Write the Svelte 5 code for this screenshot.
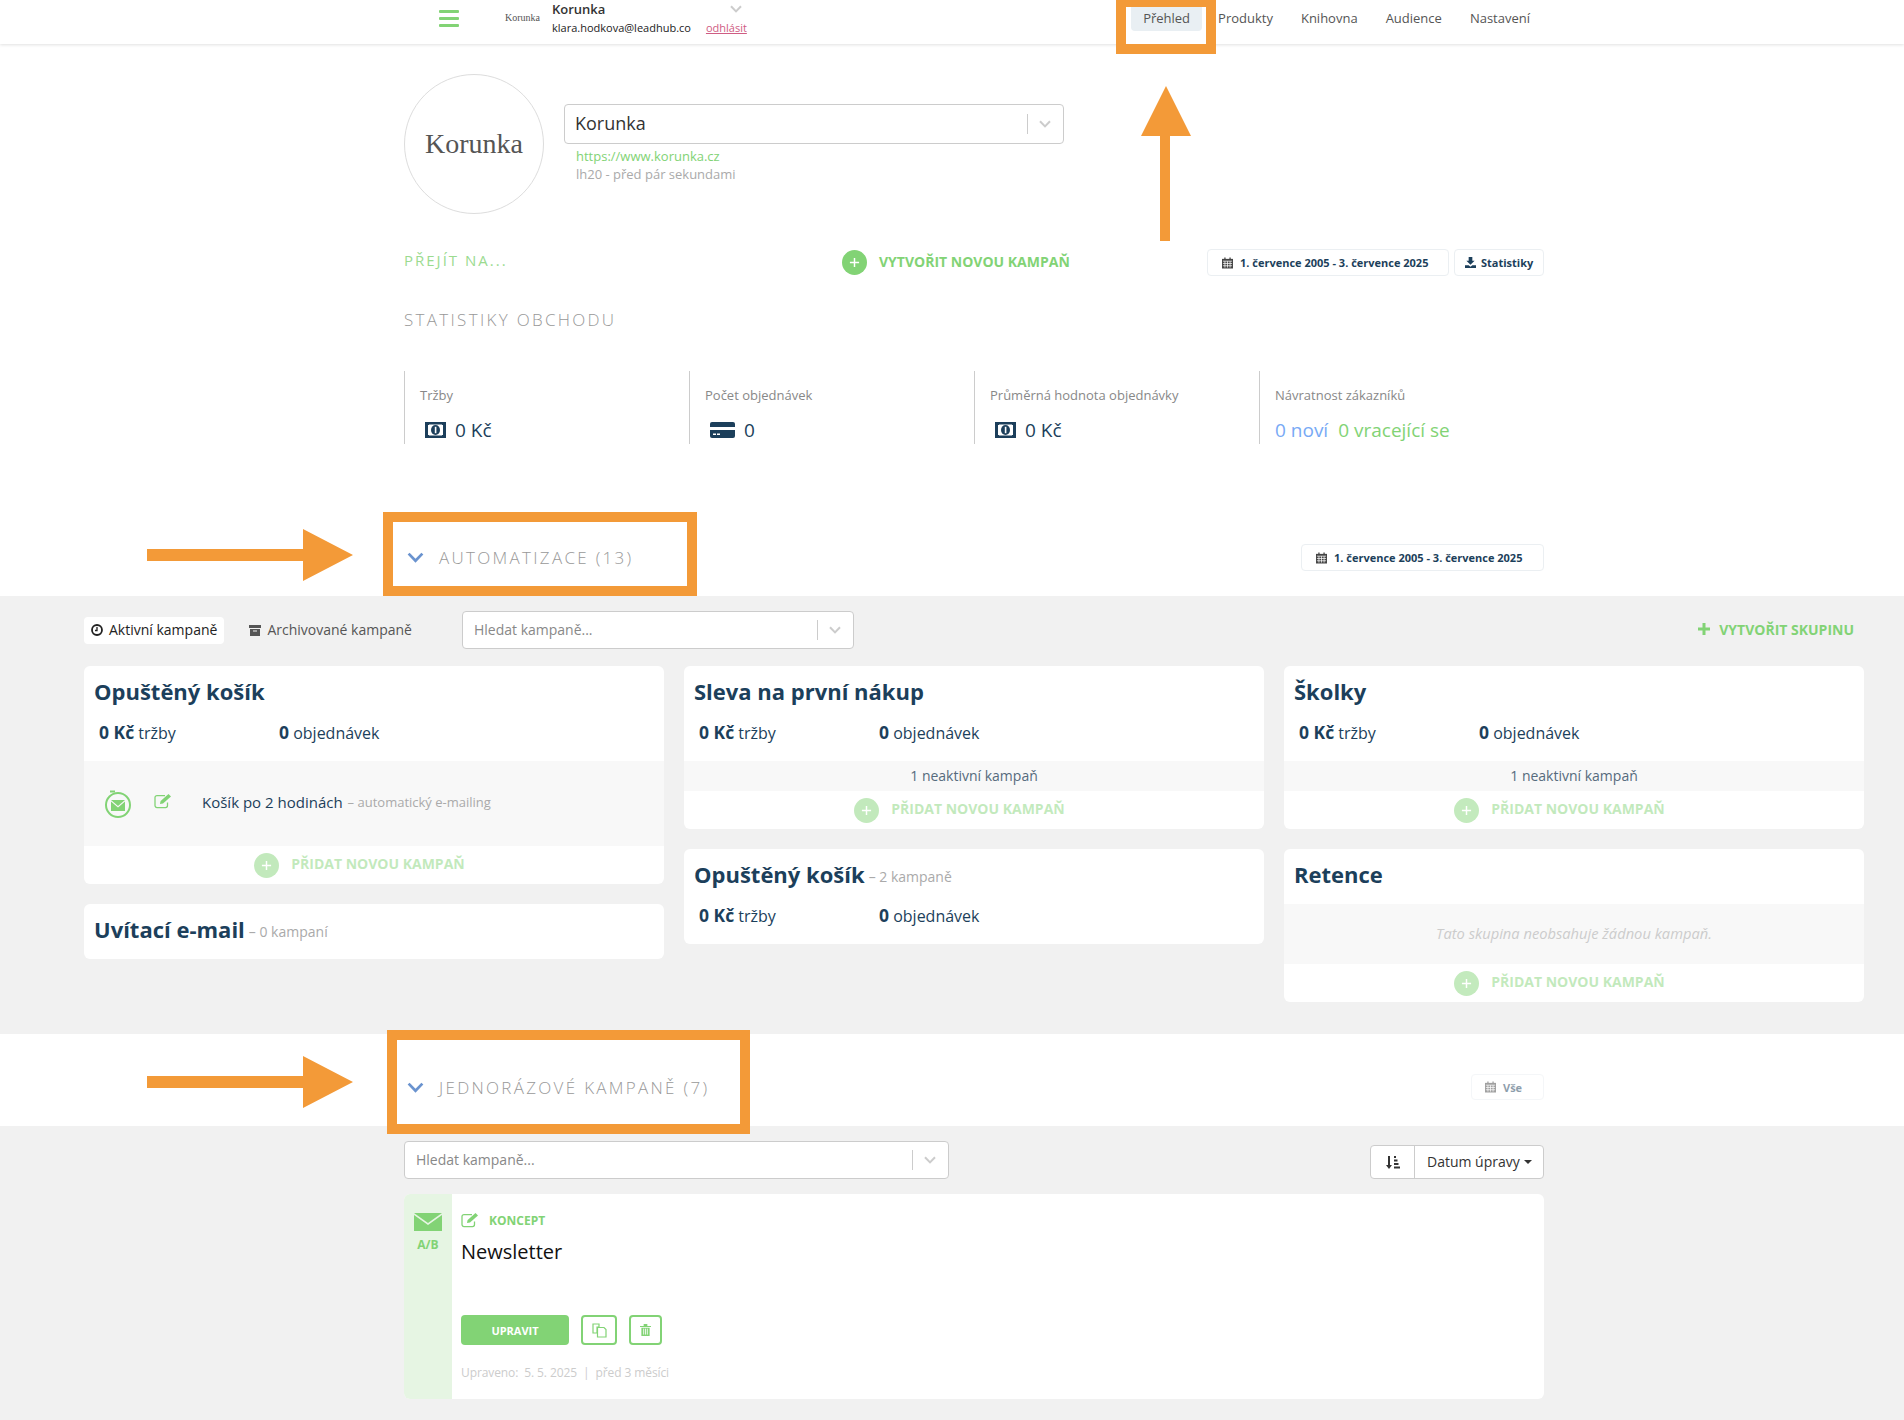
<script>
	// Campaign groups, one array per column
	const columns = [
		[
			{ title: 'Opuštěný košík', stats: true, campaign: true, add: true },
			{ title: 'Uvítací e-mail', note: '– 0 kampaní' }
		],
		[
			{ title: 'Sleva na první nákup', stats: true, inactive: '1 neaktivní kampaň', add: true },
			{ title: 'Opuštěný košík', note: '– 2 kampaně', stats: true }
		],
		[
			{ title: 'Školky', stats: true, inactive: '1 neaktivní kampaň', add: true },
			{ title: 'Retence', empty: 'Tato skupina neobsahuje žádnou kampaň.', add: true }
		]
	];

	const navLinks = ['Přehled', 'Produkty', 'Knihovna', 'Audience', 'Nastavení'];

	const stats = [
		{ label: 'Tržby', icon: 'money', value: '0 Kč' },
		{ label: 'Počet objednávek', icon: 'card', value: '0' },
		{ label: 'Průměrná hodnota objednávky', icon: 'money', value: '0 Kč' }
	];
</script>

{#snippet chevron(cls)}
	<svg class={cls} viewBox="0 0 12 8" width="12" height="8"><path d="M1 1.2 6 6.4l5-5.2" fill="none" stroke="currentColor" stroke-width="2" /></svg>
{/snippet}

{#snippet calendar()}
	<svg class="cal" viewBox="0 0 12 12" width="11" height="12">
		<path d="M0 1.5h12V12H0z" fill="currentColor" />
		<path d="M1 4h10M1 6.5h10M1 9h10M3.2 4v7M6 4v7M8.8 4v7" stroke="#fff" stroke-width=".8" fill="none" />
		<path d="M2.5 0h1.4v2.5H2.5zM8.1 0h1.4v2.5H8.1z" fill="currentColor" />
	</svg>
{/snippet}

{#snippet plusCircle()}
	<span class="plus-circle">
		<svg viewBox="0 0 12 12" width="11" height="11"><path d="M6 1v10M1 6h10" stroke="#fff" stroke-width="1.6" /></svg>
	</span>
{/snippet}

{#snippet editIcon(w)}
	<svg viewBox="0 0 19 16" width={w} height={w * 0.85}>
		<path d="M13.5 9.5v3a2 2 0 0 1-2 2H3a2 2 0 0 1-2-2V4.500a2 2 0 0 1 2-2h8" fill="none" stroke="#82d375" stroke-width="1.3" />
		<path d="M6 11l.6-3L14.500 1l2.500 2.400L9 10.500z" fill="#82d375" />
	</svg>
{/snippet}

{#snippet moneyIcon()}
	<svg class="stat-icon" viewBox="0 0 21 16" width="21" height="16">
		<path d="M0 0h21v16H0z" fill="#1c3f5b" />
		<path d="M3 2.500h15v11H3z" fill="#fff" />
		<path d="M0 0h4v3H0zM17 0h4v3h-4zM0 13h4v3H0zM17 13h4v3h-4z" fill="#1c3f5b" />
		<ellipse cx="10.500" cy="8" rx="4.500" ry="5" fill="#1c3f5b" />
		<path d="M9.800 4.800h1.600v6.400H9.800z" fill="#fff" />
	</svg>
{/snippet}

{#snippet cardIcon()}
	<svg class="stat-icon" viewBox="0 0 25 16" width="25" height="16">
		<path d="M2 0h21a2 2 0 0 1 2 2v3H0V2a2 2 0 0 1 2-2z" fill="#1c3f5b" />
		<path d="M0 8h25v6a2 2 0 0 1-2 2H2a2 2 0 0 1-2-2z" fill="#1c3f5b" />
		<path d="M3 11.500h3v1.500H3zM7 11.500h3v1.500H7z" fill="#fff" />
	</svg>
{/snippet}

{#snippet plainSelect(text, cls)}
	<div class="select {cls}">
		<span class="select-text">{text}</span>
		<span class="select-sep"></span>
		{@render chevron('select-arrow')}
	</div>
{/snippet}

<header class="topbar">
	<div class="burger"><i></i><i></i><i></i></div>
	<span class="mini-logo">Korunka</span>
	<div class="account">
		<div class="account-top">
			<strong>Korunka</strong>
			{@render chevron('account-arrow')}
		</div>
		<div class="account-bottom">
			<span>klara.hodkova@leadhub.co</span>
			<a href="#logout">odhlásit</a>
		</div>
	</div>
	<nav class="nav">
		{#each navLinks as link, i}
			<a href="#nav" class="nav-link" class:active={i === 0}>{link}</a>
		{/each}
	</nav>
</header>

<section class="wrap overview">
	<div class="brand">
		<div class="avatar"><span>Korunka</span></div>
		<div class="brand-info">
			{@render plainSelect('Korunka', 'select-big')}
			<a class="site" href="#site">https://www.korunka.cz</a>
			<div class="sync">lh20 - před pár sekundami</div>
		</div>
	</div>

	<div class="actions">
		<span class="goto">PŘEJÍT NA...</span>
		<a class="create" href="#create">{@render plusCircle()}<span>VYTVOŘIT NOVOU KAMPAŇ</span></a>
		<div class="action-btns">
			<button class="date-btn">{@render calendar()}<span>1. července 2005 - 3. července 2025</span></button>
			<button class="stat-btn">
				<svg viewBox="0 0 12 12" width="11" height="11"><path d="M4 0h4v4h2.500L6 8.500 1.500 4H4zM0 9h4l2 1.500L8 9h4v3H0z" fill="currentColor" /></svg>
				<span>Statistiky</span>
			</button>
		</div>
	</div>

	<h2 class="section-title">STATISTIKY OBCHODU</h2>

	<div class="stats">
		{#each stats as stat}
			<div class="stat">
				<div class="stat-label">{stat.label}</div>
				<div class="stat-value">
					{#if stat.icon === 'money'}{@render moneyIcon()}{:else}{@render cardIcon()}{/if}
					<span>{stat.value}</span>
				</div>
			</div>
		{/each}
		<div class="stat">
			<div class="stat-label">Návratnost zákazníků</div>
			<div class="stat-value returning"><span class="new">0 noví</span><span class="back">0 vracející se</span></div>
		</div>
	</div>

	<div class="heading-row">
		<div class="heading">
			{@render chevron('heading-arrow')}
			<span>AUTOMATIZACE (13)</span>
		</div>
		<button class="date-btn wide">{@render calendar()}<span>1. července 2005 - 3. července 2025</span></button>
	</div>
</section>

<section class="automation">
	<div class="toolbar">
		<button class="tab active">
			<svg viewBox="0 0 12 12" width="12" height="12"><circle cx="6" cy="6" r="5" fill="none" stroke="currentColor" stroke-width="1.800" /><path d="M6 3v3.500H4" fill="none" stroke="currentColor" stroke-width="1.300" /></svg>
			Aktivní kampaně
		</button>
		<button class="tab">
			<svg viewBox="0 0 12 12" width="12" height="12"><path d="M0 1h12v3H0zM1 5h10v7H1z" fill="#555" /><path d="M4 6.500h4v1H4z" fill="#f1f1f1" /></svg>
			Archivované kampaně
		</button>
		{@render plainSelect('Hledat kampaně...', 'select-search')}
		<a class="new-group" href="#group">
			<svg viewBox="0 0 12 12" width="12" height="12"><path d="M6 0v12M0 6h12" stroke="currentColor" stroke-width="3" /></svg>
			VYTVOŘIT SKUPINU
		</a>
	</div>

	<div class="groups">
		{#each columns as column}
			<div class="column">
				{#each column as group}
					<article class="group">
						<div class="group-head">
							<h3>{group.title}{#if group.note}<small>{group.note}</small>{/if}</h3>
							{#if group.stats}
								<div class="group-stats">
									<span class="revenue"><b>0 Kč</b> tržby</span>
									<span><b>0</b> objednávek</span>
								</div>
							{/if}
						</div>
						{#if group.campaign}
							<div class="band campaign-row">
								<svg class="auto-icon" viewBox="0 0 28 28" width="28" height="28">
									<circle cx="14" cy="15" r="12" fill="none" stroke="#82d375" stroke-width="2" />
									<path d="M6 1.500h5" stroke="#82d375" stroke-width="2" />
									<path d="M7 10h14l-7 6z" fill="#82d375" />
									<path d="M7 11.500v9.500h14v-9.500l-7 6z" fill="#82d375" />
								</svg>
								<span class="campaign-edit">{@render editIcon(19)}</span>
								<span class="campaign-name">Košík po 2 hodinách</span>
								<span class="campaign-type">– automatický e-mailing</span>
							</div>
						{/if}
						{#if group.inactive}
							<div class="band inactive">{group.inactive}</div>
						{/if}
						{#if group.empty}
							<div class="band empty">{group.empty}</div>
						{/if}
						{#if group.add}
							<a class="add" href="#add">{@render plusCircle()}<span>PŘIDAT NOVOU KAMPAŇ</span></a>
						{/if}
					</article>
				{/each}
			</div>
		{/each}
	</div>
</section>

<section class="wrap oneoff-head">
	<div class="heading">
		{@render chevron('heading-arrow')}
		<span>JEDNORÁZOVÉ KAMPANĚ (7)</span>
	</div>
	<button class="date-btn all">{@render calendar()}<span>Vše</span></button>
</section>

<section class="oneoff">
	<div class="wrap">
		<div class="filter-row">
			{@render plainSelect('Hledat kampaně...', 'select-oneoff')}
			<div class="sort">
				<span class="sort-icon">
					<svg viewBox="0 0 14 13" width="14" height="13"><path d="M2 0h2v9h2l-3 4-3-4h2zM8 0h2v2H8zM8 3.500h3.500v2H8zM8 7h4.500v2H8zM8 10.500h6v2H8z" fill="#333" /></svg>
				</span>
				<span class="sort-label">Datum úpravy <i class="caret"></i></span>
			</div>
		</div>

		<article class="campaign">
			<div class="campaign-side">
				<svg viewBox="0 0 28 18" width="28" height="18"><path d="M0 0h28L14 10z" fill="#82d375" /><path d="M0 2v16h28V2L14 12z" fill="#82d375" /></svg>
				<span>A/B</span>
			</div>
			<div class="campaign-body">
				<div class="status">{@render editIcon(19)}<span>KONCEPT</span></div>
				<div class="campaign-title">Newsletter</div>
				<div class="campaign-btns">
					<button class="primary">UPRAVIT</button>
					<button class="ghost copy">
						<svg viewBox="0 0 15 15" width="15" height="15"><path d="M1 1h6v3h-2v6H1zM5.500 4.500H12l2 2V14H5.500z" fill="none" stroke="#82d375" stroke-width="1.200" /></svg>
					</button>
					<button class="ghost trash">
						<svg viewBox="0 0 12 13" width="11" height="12"><path d="M0 2h12v1.200H0zM4 0h4v2H4zM1.500 4h9v9h-9z" fill="#82d375" /><path d="M4 5v6.500M6 5v6.500M8 5v6.500" stroke="#fff" stroke-width=".9" /></svg>
					</button>
				</div>
				<div class="updated">Upraveno:&nbsp; 5. 5. 2025 &nbsp;| &nbsp;před 3 měsíci</div>
			</div>
		</article>
	</div>
</section>

<!-- Orange annotations drawn over the screenshot -->
<svg class="marks" viewBox="0 0 1904 1420" width="1904" height="1420">
	<g fill="none" stroke="#f39a38" stroke-width="10">
		<rect x="1121" y="2" width="90" height="47" />
		<rect x="388" y="517" width="304" height="74" />
		<rect x="392" y="1035" width="353" height="94" />
	</g>
	<g fill="#f39a38">
		<path d="M1166 86l25 50h-21v105h-10V136h-19z" />
		<path d="M147 549h156v-20l50 26-50 26v-20H147z" />
		<path d="M147 1076h156v-20l50 26-50 26v-20H147z" />
	</g>
</svg>

<style>
	:global(body) {
		background: #fff;
		font-family: 'Open Sans', 'Noto Sans', sans-serif;
		color: #333;
	}

	:global(#app) {
		position: relative;
		overflow: hidden;
	}

	a {
		text-decoration: none;
	}

	button {
		font-family: inherit;
		cursor: pointer;
	}

	.marks {
		position: absolute;
		top: 0;
		left: 0;
		pointer-events: none;
	}

	.wrap {
		width: 1140px;
		margin-left: 404px;
	}

	/* Top bar */
	.topbar {
		height: 44px;
		display: flex;
		align-items: flex-start;
		padding: 0 362px 0 439px;
		box-shadow: 0 1px 3px rgba(0, 0, 0, 0.12);
		position: relative;
	}

	.burger {
		width: 20px;
		margin-top: 10px;
		display: flex;
		flex-direction: column;
		gap: 4px;
	}

	.burger i {
		height: 3px;
		background: #82d375;
		border-radius: 1px;
	}

	.mini-logo {
		margin: 12px 0 0 46px;
		width: 47px;
		font: 10px 'Liberation Serif', serif;
		color: #555;
	}

	.account {
		width: 194px;
		font-size: 11px;
		color: #222;
	}

	.account-top {
		display: flex;
		justify-content: space-between;
		align-items: center;
		height: 18px;
		font-size: 13px;
		padding-right: 4px;
		color: #333;
	}

	.account-top strong {
		font-weight: 600;
	}

	.account-top :global(.account-arrow) {
		color: #ccc;
	}

	.account-bottom {
		display: flex;
		gap: 15px;
		margin-top: 2px;
		line-height: 16px;
		white-space: nowrap;
	}

	.account-bottom a {
		color: #cf5c83;
		text-decoration: underline;
	}

	.nav {
		margin-left: auto;
		display: flex;
		gap: 4px;
		padding-top: 7px;
	}

	.nav-link {
		height: 24px;
		line-height: 22px;
		padding: 0 12px;
		font-size: 13px;
		color: #555;
		border-radius: 0 0 4px 4px;
	}

	.nav-link.active {
		background: #e9eff3;
	}

	/* Shop overview */
	.overview {
		padding-top: 30px;
	}

	.brand {
		display: flex;
		gap: 20px;
	}

	.avatar {
		width: 138px;
		height: 138px;
		border: 1px solid #ddd;
		border-radius: 50%;
		display: flex;
		align-items: center;
		justify-content: center;
	}

	.avatar span {
		font: 28px 'Liberation Serif', serif;
		color: #555;
	}

	.brand-info {
		padding-top: 30px;
		width: 500px;
	}

	.select {
		display: flex;
		align-items: center;
		background: #fff;
		border: 1px solid #ccc;
		border-radius: 4px;
		box-sizing: border-box;
		height: 38px;
		padding: 0 12px 2px 11px;
		color: #888;
		font-size: 14px;
	}

	.select-text {
		flex: 1;
	}

	.select-sep {
		width: 1px;
		height: 20px;
		background: #ccc;
		margin: 2px 11px 0 0;
	}

	.select :global(.select-arrow) {
		margin-top: 2px;
		color: #ccc;
	}

	.select-big {
		height: 40px;
		font-size: 18px;
		color: #333;
		padding-left: 10px;
		padding-bottom: 3px;
	}

	.site {
		display: block;
		margin: 3px 0 0 12px;
		font-size: 13px;
		line-height: 18px;
		color: #82d375;
	}

	.sync {
		margin-left: 12px;
		font-size: 13px;
		line-height: 18px;
		color: #aaa;
	}

	.actions {
		display: flex;
		align-items: center;
		height: 27px;
		margin-top: 35px;
	}

	.goto {
		width: 438px;
		margin-top: -5px;
		font-size: 15px;
		letter-spacing: 2px;
		color: #9bdb90;
	}

	.create {
		display: flex;
		align-items: center;
		gap: 12px;
		font-size: 14px;
		font-weight: 700;
		color: #82d375;
		white-space: nowrap;
	}

	.create span:last-child {
		margin-top: -2px;
	}

	.plus-circle {
		flex: none;
		width: 25px;
		height: 25px;
		border-radius: 50%;
		background: #82d375;
		display: flex;
		align-items: center;
		justify-content: center;
	}

	.action-btns {
		margin-left: auto;
		display: flex;
		gap: 5px;
	}

	.date-btn,
	.stat-btn {
		height: 27px;
		box-sizing: border-box;
		display: flex;
		align-items: center;
		background: #fff;
		border: 1px solid #ebeff2;
		border-radius: 4px;
		color: #1c3f5b;
		font-size: 11px;
		font-weight: 700;
		white-space: nowrap;
	}

	.date-btn {
		width: 242px;
		padding: 0 0 0 14px;
		gap: 7px;
	}

	.date-btn .cal {
		color: #444;
	}

	.date-btn.wide {
		width: 243px;
	}

	.stat-btn {
		width: 90px;
		padding: 0 0 0 10px;
		gap: 5px;
	}

	.section-title {
		margin: 33px 0 0;
		font-size: 17px;
		line-height: 22px;
		font-weight: 300;
		letter-spacing: 2.3px;
		color: #999;
	}

	.stats {
		display: grid;
		grid-template-columns: repeat(4, 285px);
		margin-top: 40px;
	}

	.stat {
		height: 73px;
		box-sizing: border-box;
		border-left: 1px solid #ccc;
		padding: 15px 0 0 15px;
	}

	.stat-label {
		font-size: 13px;
		line-height: 18px;
		color: #888;
	}

	.stat-value {
		display: flex;
		align-items: center;
		height: 26px;
		margin-top: 13px;
		font-size: 19px;
		color: #1c3f5b;
	}

	.stat-icon {
		margin: 0 9px 0 5px;
	}

	.returning {
		gap: 10px;
	}

	.new {
		color: #78a9f5;
	}

	.back {
		color: #82d375;
	}

	.heading-row {
		display: flex;
		align-items: center;
		justify-content: space-between;
		margin-top: 100px;
		padding-bottom: 25px;
	}

	.heading {
		display: flex;
		align-items: center;
		padding-left: 3px;
		font-size: 17px;
		font-weight: 300;
		letter-spacing: 2.3px;
		color: #999;
	}

	.heading :global(.heading-arrow) {
		width: 17px;
		height: 11px;
		margin-right: 15px;
		color: #6a93cf;
	}

	/* Automation */
	.automation {
		background: #f1f1f1;
		padding: 15px 40px 32px 84px;
	}

	.toolbar {
		display: flex;
		align-items: center;
		height: 38px;
		margin-bottom: 17px;
	}

	.tab {
		height: 27px;
		padding: 0 7px 1px;
		display: flex;
		align-items: center;
		gap: 6px;
		background: none;
		border: 0;
		border-radius: 4px;
		font-size: 14px;
		color: #555;
		white-space: nowrap;
	}

	.tab.active {
		background: #fff;
		color: #222;
		margin-right: 18px;
	}

	.select-search {
		width: 392px;
		margin-left: 43px;
	}

	.new-group {
		margin: -2px 10px 0 auto;
		display: flex;
		align-items: center;
		gap: 9px;
		font-size: 14px;
		font-weight: 700;
		color: #82d375;
	}

	.groups {
		display: grid;
		grid-template-columns: repeat(3, 580px);
		gap: 20px;
	}

	.column {
		display: flex;
		flex-direction: column;
		gap: 20px;
	}

	.group {
		background: #fff;
		border-radius: 6px;
		overflow: hidden;
	}

	.group-head {
		padding: 10px 10px 15px;
	}

	.group-head:has(.group-stats) {
		padding-bottom: 17px;
	}

	h3 {
		margin: 0;
		font-size: 22px;
		line-height: 30px;
		font-weight: 700;
		color: #1c3f5b;
	}

	h3 small {
		position: relative;
		top: -1px;
		margin-left: 4px;
		font-size: 14px;
		font-weight: 400;
		line-height: 0;
		color: #aaa;
	}

	.group-stats {
		display: flex;
		margin: 16px 0 0 5px;
		font-size: 16px;
		line-height: 22px;
		color: #1c3f5b;
	}

	.group-stats b {
		font-size: 17.5px;
		line-height: 0;
		font-weight: 700;
	}

	.revenue {
		width: 180px;
	}

	.band {
		background: #f8f8f8;
	}

	.campaign-row {
		height: 85px;
		display: flex;
		align-items: center;
		padding: 0 0 4px 20px;
		box-sizing: border-box;
		font-size: 15px;
		color: #1c3f5b;
	}

	.auto-icon {
		margin-top: 4px;
	}

	.campaign-edit {
		margin: 0 0 0 22px;
		display: flex;
	}

	.campaign-name {
		margin-left: 29px;
	}

	.campaign-type {
		margin: 1px 0 0 5px;
		font-size: 13px;
		color: #aaa;
	}

	.inactive {
		height: 30px;
		line-height: 30px;
		text-align: center;
		font-size: 14px;
		color: #566b7d;
	}

	.empty {
		height: 60px;
		line-height: 58px;
		text-align: center;
		font-size: 14.7px;
		font-style: italic;
		color: #ccc;
	}

	.add {
		height: 38px;
		display: flex;
		align-items: center;
		justify-content: center;
		gap: 12px;
		padding-right: 29px;
		font-size: 14px;
		font-weight: 700;
		color: #82d375;
		opacity: 0.48;
	}

	.add span:last-child {
		margin-top: -3px;
	}

	/* One-off campaigns */
	.oneoff-head {
		height: 92px;
		box-sizing: border-box;
		padding-top: 14px;
		display: flex;
		align-items: center;
		justify-content: space-between;
	}

	.date-btn.all {
		width: 73px;
		height: 26px;
		padding-left: 13px;
		opacity: 0.5;
	}

	.oneoff {
		background: #f1f1f1;
		padding: 15px 0 21px;
	}

	.filter-row {
		display: flex;
		justify-content: space-between;
		align-items: flex-end;
		margin-bottom: 15px;
	}

	.select-oneoff {
		width: 545px;
	}

	.sort {
		width: 174px;
		height: 34px;
		box-sizing: border-box;
		display: flex;
		background: #fff;
		border: 1px solid #ccc;
		border-radius: 4px;
		font-size: 14px;
		color: #333;
	}

	.sort-icon {
		width: 43px;
		display: flex;
		align-items: center;
		justify-content: center;
		border-right: 1px solid #ccc;
	}

	.sort-label {
		flex: 1;
		display: flex;
		align-items: center;
		padding: 0 0 2px 12px;
		gap: 4px;
		white-space: nowrap;
	}

	.caret {
		width: 0;
		height: 0;
		margin-top: 2px;
		border: 4px solid transparent;
		border-top-color: #333;
		border-bottom: 0;
	}

	.campaign {
		height: 205px;
		display: flex;
		background: #fff;
		border-radius: 6px;
		overflow: hidden;
	}

	.campaign-side {
		width: 48px;
		background: #e6f5e3;
		display: flex;
		flex-direction: column;
		align-items: center;
		padding-top: 19px;
		font-size: 12px;
		font-weight: 700;
		color: #82d375;
	}

	.campaign-side span {
		margin-top: 5px;
	}

	.campaign-body {
		padding: 17px 0 0 9px;
	}

	.status {
		display: flex;
		align-items: center;
		gap: 9px;
		height: 18px;
		font-size: 12px;
		font-weight: 700;
		color: #82d375;
	}

	.campaign-title {
		margin-top: 9px;
		font-size: 20px;
		line-height: 28px;
		color: #111;
	}

	.campaign-btns {
		display: flex;
		gap: 12px;
		margin-top: 49px;
	}

	.primary {
		width: 108px;
		height: 30px;
		background: #82d375;
		border: 0;
		border-radius: 4px;
		color: #fff;
		font-size: 11px;
		font-weight: 700;
	}

	.ghost {
		height: 30px;
		padding: 0;
		display: flex;
		align-items: center;
		justify-content: center;
		background: #fff;
		border: 2px solid #82d375;
		border-radius: 4px;
	}

	.copy {
		width: 36px;
	}

	.trash {
		width: 33px;
	}

	.updated {
		margin-top: 20px;
		font-size: 12px;
		letter-spacing: -0.1px;
		line-height: 16px;
		color: #ccc;
	}
</style>
